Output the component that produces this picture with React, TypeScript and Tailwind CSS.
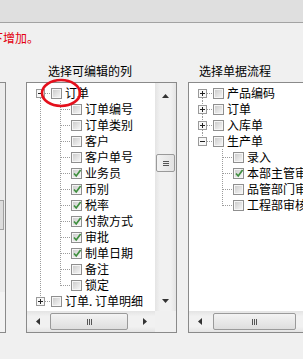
import React from "react";

const FONT: React.CSSProperties = {
  fontFamily: '"Noto Sans CJK SC", "Noto Sans", sans-serif',
};

type Row = {
  label: string;
  depth: 0 | 1;
  checked?: boolean;
  expander?: "+" | "-";
  rootUp?: boolean;
  rootDown?: boolean;
  rootThrough?: boolean;
  last?: boolean;
};

const dot = {
  stroke: "#9c9c9c",
  strokeWidth: 1,
  strokeDasharray: "1 1",
  shapeRendering: "crispEdges" as const,
};

function Lines({ row }: { row: Row }) {
  if (row.depth === 0) {
    return (
      <svg width={24} height={16} className="shrink-0 block">
        {row.rootUp && <line x1={13.5} y1={0} x2={13.5} y2={4} {...dot} />}
        {row.rootDown && <line x1={13.5} y1={13} x2={13.5} y2={16} {...dot} />}
        <line x1={18} y1={8.5} x2={24} y2={8.5} {...dot} />
        <rect x={9.5} y={4.5} width={8} height={8} fill="#f8f8f8" stroke="#9a9a9a" shapeRendering="crispEdges" />
        <line x1={11} y1={8.5} x2={16} y2={8.5} stroke="#222" shapeRendering="crispEdges" />
        {row.expander === "+" && (
          <line x1={13.5} y1={6} x2={13.5} y2={11} stroke="#222" shapeRendering="crispEdges" />
        )}
      </svg>
    );
  }
  return (
    <svg width={44} height={16} className="shrink-0 block">
      {row.rootThrough && <line x1={13.5} y1={0} x2={13.5} y2={16} {...dot} />}
      <line x1={33.5} y1={0} x2={33.5} y2={row.last ? 9 : 16} {...dot} />
      <line x1={34} y1={8.5} x2={44} y2={8.5} {...dot} />
    </svg>
  );
}

function Checkbox({ checked }: { checked?: boolean }) {
  return (
    <div className="relative w-[11px] h-[11px] shrink-0 border border-[#8f8f8f] bg-[#f6f6f6] p-[1px]">
      <div className="w-full h-full bg-[linear-gradient(135deg,#cdcdcd,#f4f4f4)]" />
      {checked && (
        <svg width={11} height={11} viewBox="0 0 11 11" className="absolute left-[0px] top-[-1px]">
          <path d="M2 5.5 L4.2 8 L8.6 2" fill="none" stroke="#3f8f3f" strokeWidth={1.7} />
        </svg>
      )}
    </div>
  );
}

function TreeRow({ row }: { row: Row }) {
  return (
    <div className="flex items-center h-[16px] whitespace-nowrap">
      <Lines row={row} />
      <Checkbox checked={row.checked} />
      <span className="ml-[3px] text-[12px] leading-[16px] text-black">{row.label}</span>
    </div>
  );
}

function UpArrow() {
  return (
    <svg width={7} height={4} className="block">
      <polygon points="0,4 3.5,0 7,4" fill="#333" />
    </svg>
  );
}
function DownArrow() {
  return (
    <svg width={7} height={4} className="block">
      <polygon points="0,0 3.5,4 7,0" fill="#333" />
    </svg>
  );
}
function LeftArrow() {
  return (
    <svg width={4} height={7} className="block">
      <polygon points="4,0 0,3.5 4,7" fill="#333" />
    </svg>
  );
}
function RightArrow() {
  return (
    <svg width={4} height={7} className="block">
      <polygon points="0,0 4,3.5 0,7" fill="#333" />
    </svg>
  );
}

function VScroll() {
  return (
    <div className="w-[21px] shrink-0 flex flex-col bg-[linear-gradient(90deg,#e4e4e4,#f1f1f1_25%,#f1f1f1_75%,#e4e4e4)]">
      <div className="h-[21px] shrink-0 flex items-center justify-center pt-[5px]">
        <UpArrow />
      </div>
      <div className="flex-1 flex flex-col">
        <div className="mt-[50px] mx-[1px] h-[18px] rounded-[2px] border border-[#9a9a9a] bg-[linear-gradient(90deg,#f3f3f3,#e2e2e2)] flex flex-col items-center justify-center gap-[1px]">
          <div className="w-[6px] h-[1px] bg-[#555]" />
          <div className="w-[6px] h-[1px] bg-[#555]" />
          <div className="w-[6px] h-[1px] bg-[#555]" />
        </div>
      </div>
      <div className="h-[21px] shrink-0 flex items-center justify-center">
        <DownArrow />
      </div>
    </div>
  );
}

function HScroll({ thumbLeft, thumbWidth, right }: { thumbLeft: string; thumbWidth: string; right?: boolean }) {
  return (
    <div className="flex-1 h-[21px] flex items-center bg-[linear-gradient(180deg,#e4e4e4,#f1f1f1_25%,#f1f1f1_75%,#e4e4e4)]">
      <div className="w-[21px] h-full shrink-0 flex items-center justify-center">
        <LeftArrow />
      </div>
      <div className={`${thumbLeft} ${thumbWidth} h-[17px] shrink-0 rounded-[2px] border border-[#9a9a9a] bg-[linear-gradient(180deg,#f3f3f3,#dedede)] flex items-center justify-center gap-[1px]`}>
        <div className="w-[1px] h-[6px] bg-[#555]" />
        <div className="w-[1px] h-[6px] bg-[#555]" />
        <div className="w-[1px] h-[6px] bg-[#555]" />
      </div>
      <div className="flex-1" />
      {right && (
        <div className="w-[21px] h-full shrink-0 flex items-center justify-center">
          <RightArrow />
        </div>
      )}
    </div>
  );
}

const middleRows: Row[] = [
  { label: "订单", depth: 0, expander: "-", rootDown: true },
  { label: "订单编号", depth: 1, rootThrough: true },
  { label: "订单类别", depth: 1, rootThrough: true },
  { label: "客户", depth: 1, rootThrough: true },
  { label: "客户单号", depth: 1, rootThrough: true },
  { label: "业务员", depth: 1, rootThrough: true, checked: true },
  { label: "币别", depth: 1, rootThrough: true, checked: true },
  { label: "税率", depth: 1, rootThrough: true, checked: true },
  { label: "付款方式", depth: 1, rootThrough: true, checked: true },
  { label: "审批", depth: 1, rootThrough: true, checked: true },
  { label: "制单日期", depth: 1, rootThrough: true, checked: true },
  { label: "备注", depth: 1, rootThrough: true },
  { label: "锁定", depth: 1, rootThrough: true, last: true },
  { label: "订单. 订单明细", depth: 0, expander: "+", rootUp: true },
];

const rightRows: Row[] = [
  { label: "产品编码", depth: 0, expander: "+", rootDown: true },
  { label: "订单", depth: 0, expander: "+", rootUp: true, rootDown: true },
  { label: "入库单", depth: 0, expander: "+", rootUp: true, rootDown: true },
  { label: "生产单", depth: 0, expander: "-", rootUp: true },
  { label: "录入", depth: 1 },
  { label: "本部主管审核", depth: 1, checked: true },
  { label: "品管部门审核", depth: 1 },
  { label: "工程部审核", depth: 1, last: true },
];

export default function App() {
  return (
    <div className="relative w-[303px] h-[359px] overflow-hidden bg-[#f0f0f0] flex flex-col" style={FONT}>
      <div className="h-[23px] shrink-0 bg-[#dfdfdf] border-b border-[#a3a3a3]" />
      <div className="mt-[7px] h-[16px] -ml-[9px] text-[12px] leading-[16px] text-[#e3000f] whitespace-nowrap">
        下增加。
      </div>
      <div className="flex mt-[17px] shrink-0">
        {/* left partial panel */}
        <div className="w-[6px] shrink-0 flex flex-col">
          <div className="h-[16px] mb-[3px]" />
          <div className="h-[251px] border-y border-r border-[#8a8a8a] bg-white flex flex-col">
            <div className="h-[209px] bg-[#ececec] flex flex-col">
              <div className="mt-[117px] h-[30px] w-[4px] border-y border-r border-[#a0a0a0] bg-[#dcdcdc]" />
            </div>
            <div className="flex-1 bg-[#f3f3f3]" />
          </div>
        </div>

        {/* middle panel */}
        <div className="ml-[20px] w-[151px] shrink-0 flex flex-col">
          <div className="h-[16px] mb-[3px] pl-[22px] text-[12px] leading-[16px] text-black whitespace-nowrap">
            选择可编辑的列
          </div>
          <div className="h-[251px] border border-[#8a8a8a] bg-white flex flex-col">
            <div className="flex-1 flex min-h-0">
              <div className="flex-1 overflow-hidden pt-[2px]">
                {middleRows.map((r, i) => (
                  <TreeRow key={i} row={r} />
                ))}
              </div>
              <VScroll />
            </div>
            <div className="flex h-[21px] shrink-0">
              <HScroll thumbLeft="ml-[2px]" thumbWidth="w-[78px]" right />
              <div className="w-[21px] shrink-0 bg-[#f0f0f0]" />
            </div>
          </div>
        </div>

        {/* right panel */}
        <div className="ml-[11px] w-[140px] shrink-0 flex flex-col">
          <div className="h-[16px] mb-[3px] pl-[11px] text-[12px] leading-[16px] text-black whitespace-nowrap">
            选择单据流程
          </div>
          <div className="h-[251px] border border-[#8a8a8a] bg-white flex flex-col">
            <div className="flex-1 overflow-hidden pt-[2px]">
              {rightRows.map((r, i) => (
                <TreeRow key={i} row={r} />
              ))}
            </div>
            <div className="flex h-[21px] shrink-0">
              <HScroll thumbLeft="ml-[3px]" thumbWidth="w-[83px]" right />
            </div>
          </div>
        </div>
      </div>

      {/* red annotation ellipse */}
      <svg width={44} height={32} className="absolute left-[40px] top-[78px]">
        <ellipse cx={21} cy={15} rx={19} ry={13} fill="none" stroke="#e4101c" strokeWidth={2.6} />
      </svg>
    </div>
  );
}
